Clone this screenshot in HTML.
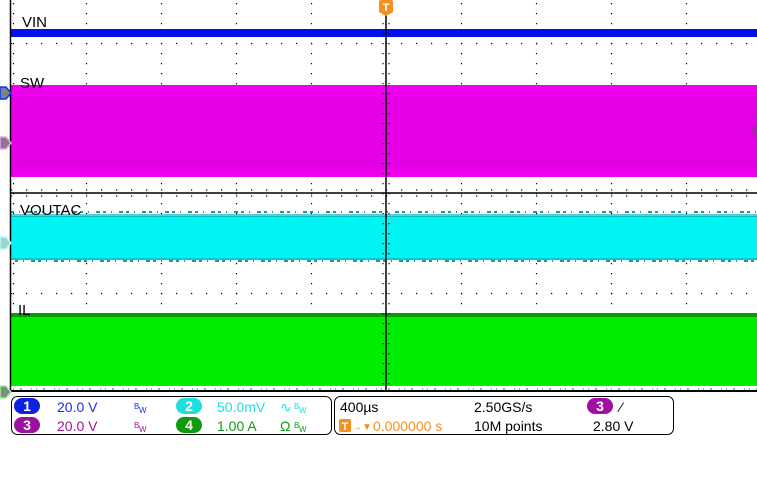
<!DOCTYPE html>
<html><head><meta charset="utf-8"><style>
html,body{margin:0;padding:0;background:#fff;width:757px;height:482px;overflow:hidden}
svg{display:block}
text{font-family:"Liberation Sans","DejaVu Sans",sans-serif}
</style></head><body>
<svg width="757" height="482" viewBox="0 0 757 482" xmlns="http://www.w3.org/2000/svg">
<rect width="757" height="482" fill="#fff"/>
<g stroke="#000" stroke-width="1.2" stroke-dasharray="1.2 8.8">
<line x1="86.5" y1="3" x2="86.5" y2="386"/><line x1="161.5" y1="3" x2="161.5" y2="386"/>
<line x1="236.5" y1="3" x2="236.5" y2="386"/><line x1="311.5" y1="3" x2="311.5" y2="386"/>
<line x1="461.5" y1="3" x2="461.5" y2="386"/><line x1="536.5" y1="3" x2="536.5" y2="386"/>
<line x1="611.5" y1="3" x2="611.5" y2="386"/><line x1="686.5" y1="3" x2="686.5" y2="386"/>
<line x1="13.5" y1="3" x2="13.5" y2="386"/>
</g>
<g stroke="#000" stroke-width="1.2" stroke-dasharray="1.2 13.8">
<line x1="11" y1="43.5" x2="757" y2="43.5"/><line x1="11" y1="93.5" x2="757" y2="93.5"/>
<line x1="11" y1="143.5" x2="757" y2="143.5"/><line x1="11" y1="243.5" x2="757" y2="243.5"/>
<line x1="11" y1="293.5" x2="757" y2="293.5"/><line x1="11" y1="343.5" x2="757" y2="343.5"/>
</g>
<rect x="11" y="29" width="746" height="8" fill="#0010ee"/>
<rect x="11" y="85" width="746" height="92" fill="#ee00ee"/>
<rect x="11" y="95" width="746" height="75" fill="#dd00dd" opacity="0.5"/>
<rect x="11" y="216" width="746" height="44" fill="#00f4f4"/>
<g fill="#0aa0a8">
<rect x="11" y="214" width="746" height="3" opacity="0.6"/>
<rect x="11" y="258" width="746" height="2" opacity="0.5"/>
</g>
<g stroke="#0aa0a8" stroke-width="2" stroke-dasharray="3 5 1 7 4 3">
<line x1="11" y1="212" x2="757" y2="212"/>
<line x1="15" y1="261" x2="757" y2="261"/>
</g>
<rect x="11" y="313" width="746" height="73" fill="#00ec00"/>
<rect x="11" y="313" width="746" height="4" fill="#0a9a0a"/>
<g stroke="#0a8a0a" stroke-width="1" stroke-dasharray="1 6 2 9 1 4">
<line x1="13" y1="389" x2="757" y2="389"/>
</g>
<line x1="386" y1="0" x2="386" y2="392" stroke="#000" stroke-width="1.5"/>
<line x1="11" y1="193" x2="757" y2="193" stroke="#000" stroke-width="1.5"/>
<g stroke="#000" stroke-width="1.2" stroke-dasharray="1.2 13.8">
<line x1="11" y1="190" x2="757" y2="190"/><line x1="11" y1="196" x2="757" y2="196"/>
</g>
<g stroke="#000" stroke-width="1.2" stroke-dasharray="1.2 8.8">
<line x1="383" y1="3" x2="383" y2="386"/><line x1="389" y1="3" x2="389" y2="386"/>
</g>
<line x1="10.5" y1="0" x2="10.5" y2="392" stroke="#000" stroke-width="1.5"/>
<line x1="10" y1="391" x2="757" y2="391" stroke="#000" stroke-width="2"/>
<rect x="379" y="0" width="14" height="13" rx="2" fill="#f5901e"/>
<path d="M380 12 L386 16 L392 12 Z" fill="#f5901e"/>
<text x="386" y="11" font-size="11" font-weight="bold" fill="#fff" text-anchor="middle">T</text>
<g font-size="15" fill="#000">
<text x="22" y="27">VIN</text>
<text x="20" y="88">SW</text>
<text x="20" y="215">VOUTAC</text>
<text x="18" y="315">IL</text>
</g>
<path d="M0 87 L6 87 L11 93 L6 99 L0 99 Z" fill="#7a857a" stroke="#1030ff" stroke-width="1.5"/>
<path d="M0 137 L6 137 L11 143 L6 149 L0 149 Z" fill="#8a7a8a" stroke="#f0a0f0" stroke-width="1.5"/>
<path d="M0 237 L6 237 L11 243 L6 249 L0 249 Z" fill="#a0d0d0" stroke="#b0ffff" stroke-width="1.5"/>
<path d="M0 386 L6 386 L11 392 L6 398 L0 398 Z" fill="#7a907a" stroke="#a0f0a0" stroke-width="1.5"/>
<path d="M757 124 L750 131 L757 138 Z" fill="#b020b0"/>
<rect x="11.5" y="396.5" width="320" height="38" rx="6" fill="#fff" stroke="#000"/>
<rect x="334.5" y="396.5" width="339" height="38" rx="6" fill="#fff" stroke="#000"/>
<rect x="14" y="398" width="26" height="16" rx="8" fill="#1020e0"/>
<text x="27" y="411" font-size="14" fill="#fff" text-anchor="middle" font-weight="bold">1</text>
<rect x="14" y="417" width="26" height="16" rx="8" fill="#a010a0"/>
<text x="27" y="430" font-size="14" fill="#fff" text-anchor="middle" font-weight="bold">3</text>
<rect x="176" y="398" width="26" height="16" rx="8" fill="#20dde0"/>
<text x="189" y="411" font-size="14" fill="#fff" text-anchor="middle" font-weight="bold">2</text>
<rect x="176" y="417" width="26" height="16" rx="8" fill="#109a10"/>
<text x="189" y="430" font-size="14" fill="#fff" text-anchor="middle" font-weight="bold">4</text>
<g font-size="14">
<text x="57" y="412" fill="#2030e0">20.0 V</text>
<text x="57" y="431" fill="#a010a0">20.0 V</text>
<text x="217" y="412" fill="#20dde0">50.0mV</text>
<text x="217" y="431" fill="#109a10">1.00 A</text>
<text x="280" y="412" fill="#20dde0">∿</text>
<text x="280" y="431" fill="#109a10">Ω</text>
</g>
<g font-size="8">
<text x="134" y="409" fill="#2030e0">B</text><text x="139" y="413" fill="#2030e0">W</text>
<text x="134" y="428" fill="#a010a0">B</text><text x="139" y="432" fill="#a010a0">W</text>
<text x="294" y="409" fill="#20dde0">B</text><text x="299" y="413" fill="#20dde0">W</text>
<text x="294" y="428" fill="#109a10">B</text><text x="299" y="432" fill="#109a10">W</text>
</g>
<g font-size="14" fill="#000">
<text x="340" y="412">400µs</text>
<text x="474" y="412">2.50GS/s</text>
<text x="474" y="431">10M points</text>
<text x="593" y="431">2.80 V</text>
<text x="620" y="412">⁄</text>
</g>
<rect x="587" y="398" width="26" height="16" rx="8" fill="#a010a0"/>
<text x="600" y="411" font-size="14" fill="#fff" text-anchor="middle" font-weight="bold">3</text>
<rect x="339" y="419" width="12" height="13" rx="2" fill="#f5901e"/>
<text x="345" y="430" font-size="11" fill="#fff" font-weight="bold" text-anchor="middle">T</text>
<text x="352" y="430" font-size="10" fill="#f5901e">→▼</text>
<text x="373" y="431" font-size="14" fill="#f5901e">0.000000 s</text>
</svg>
</body></html>
